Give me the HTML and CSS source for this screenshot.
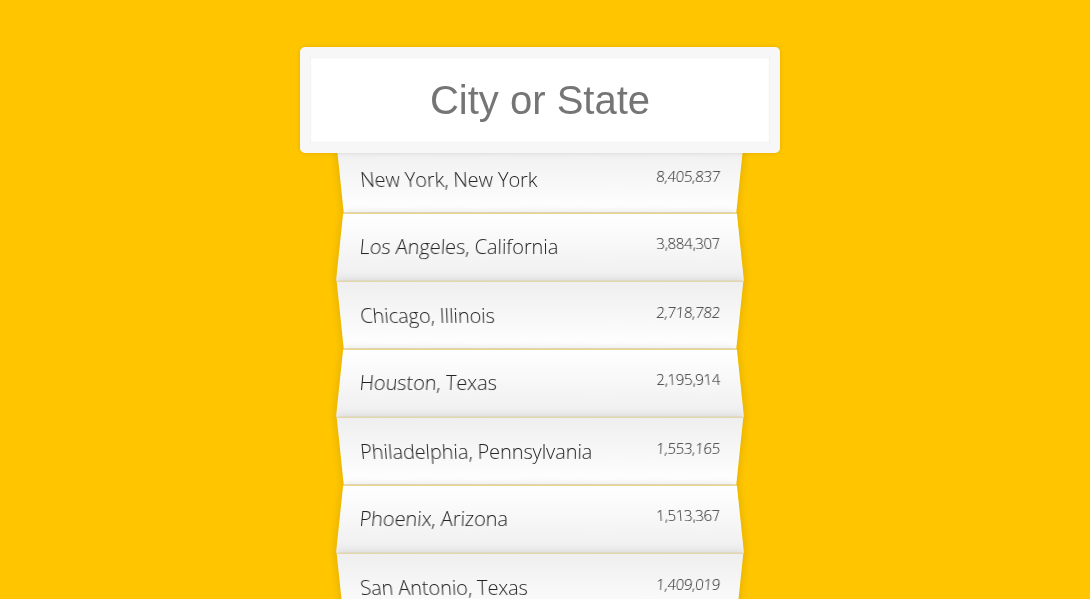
FILE: index.html
```html
<!DOCTYPE html>
<html lang="en">
<head>
    <meta charset="UTF-8">
    <meta name="viewport" content="width=device-width, initial-scale=1.0">
    <title>Type Ahead</title>
    <link rel="stylesheet" href="styles.css">
</head>
<body>
    <form class="search-form">
        <input type="text" class="search" placeholder="City or State">
        <ul class="suggestions">
            <li><span class="name">New York, New York</span><span class="population">8,405,837</span></li>
            <li><span class="name">Los Angeles, California</span><span class="population">3,884,307</span></li>
            <li><span class="name">Chicago, Illinois</span><span class="population">2,718,782</span></li>
            <li><span class="name">Houston, Texas</span><span class="population">2,195,914</span></li>
            <li><span class="name">Philadelphia, Pennsylvania</span><span class="population">1,553,165</span></li>
            <li><span class="name">Phoenix, Arizona</span><span class="population">1,513,367</span></li>
            <li><span class="name">San Antonio, Texas</span><span class="population">1,409,019</span></li>
        </ul>
    </form>
</body>
</html>
```

FILE: styles.css
```css
html { box-sizing: border-box; background: #ffc600; font-family: "Open Sans", "Noto Sans", sans-serif; font-size: 20px; font-weight: 300; }
*, *:before, *:after { box-sizing: inherit; }
body { margin: 0; padding-right: 10px; height: 599px; overflow: hidden; }

.search-form { max-width: 400px; margin: 37px auto 0; }

input { width: 100%; padding: 20px; }
input.search { margin: 0; text-align: center; outline: 0; border: 10px solid #f7f7f7; width: 120%; left: -10%; position: relative; top: 10px; z-index: 2; border-radius: 5px; font-family: "Liberation Sans", Arial, sans-serif; font-size: 40px; line-height: 46px; height: 106px; background: #fff; box-shadow: 0 0 5px rgba(0, 0, 0, 0.12), inset 0 0 2px rgba(0, 0, 0, 0.19); }
input.search::placeholder { color: #757575; }

.suggestions { margin: 0; padding: 0; position: relative; }
.suggestions li { background: #fff; list-style: none; border-bottom: 1px solid #e3d6a6; box-shadow: 0 0 10px rgba(0, 0, 0, 0.14); margin: 0; padding: 20px; height: 68px; display: flex; justify-content: space-between; color: #222; line-height: 27px; letter-spacing: -0.1px; }
.suggestions li:nth-child(even) { transform: perspective(100px) rotateX(3deg) translateY(2px) scale(1.001); background: linear-gradient(to bottom, #ffffff 0%, #efefef 100%); }
.suggestions li:nth-child(odd) { transform: perspective(100px) rotateX(-3deg) translateY(3px); background: linear-gradient(to top, #ffffff 0%, #efefef 100%); }

.population { font-size: 15px; line-height: 20px; letter-spacing: -0.3px; }
```
